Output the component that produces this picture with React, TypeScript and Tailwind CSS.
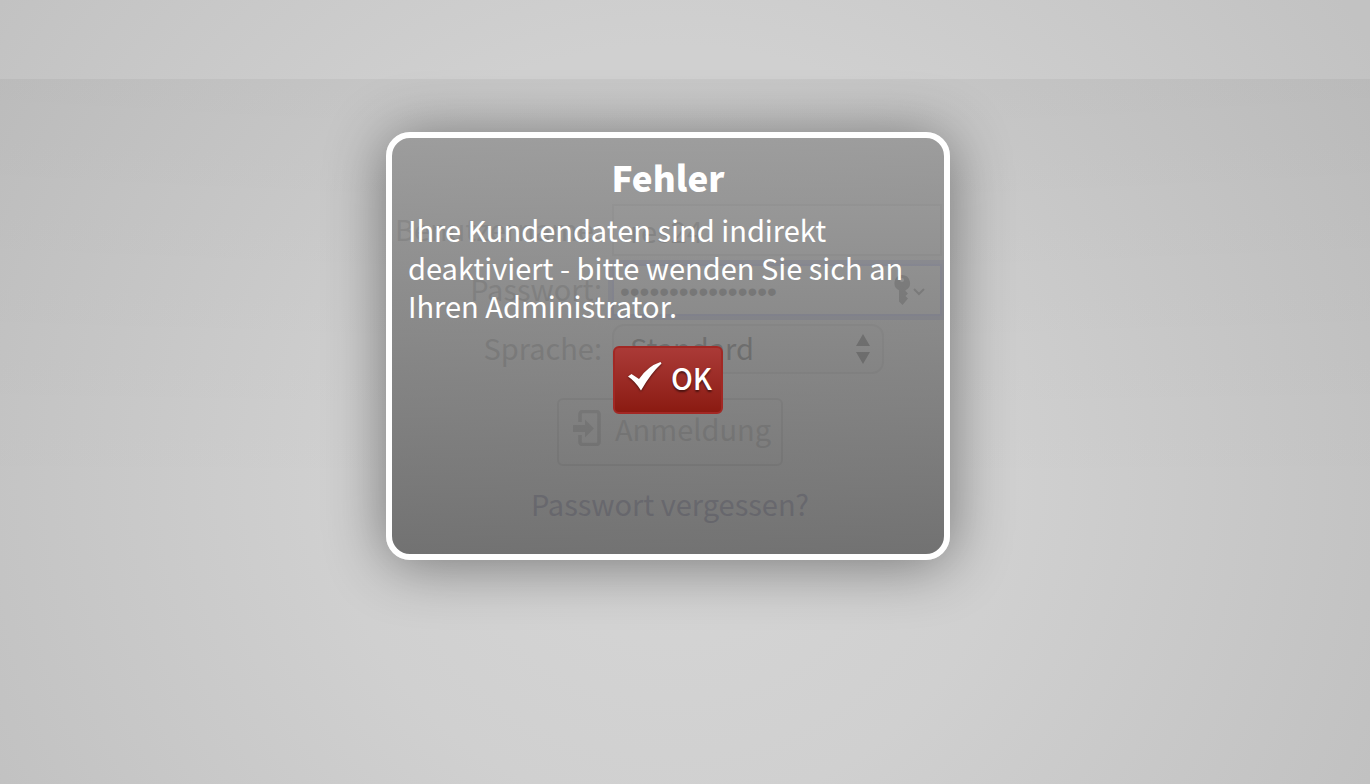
const labelText = "pb-1 text-right text-[#8e8e8e]";

function LoginIcon() {
  return (
    <svg viewBox="0 0 28 36" className="h-9 w-7 shrink-0" aria-hidden="true">
      <path d="M7 12V4a2.500 2.500 0 0 1 2.500-2.500h14A2.500 2.500 0 0 1 26 4v28a2.500 2.500 0 0 1-2.500 2.500h-14A2.500 2.500 0 0 1 7 32v-7" fill="none" stroke="currentColor" strokeWidth="3.600" />
      <path d="M0 15h12V9.500L21 18.500l-9 9V22H0z" fill="currentColor" />
    </svg>
  );
}

function KeyIcon() {
  return (
    <svg viewBox="0 0 32 30" className="h-[30px] w-8 shrink-0" aria-hidden="true">
      <path fillRule="evenodd" fill="currentColor" d="M8 0a8 8 0 0 1 3.500 15.200V16l2.500 2.500-2.500 2.500 2.500 2.500L8.500 30 5 26.500V15.200A8 8 0 0 1 8 0m0 3a2 2 0 1 0 0 4 2 2 0 0 0 0-4" />
      <path d="M20 14l5 5 5-5" fill="none" stroke="currentColor" strokeWidth="2" />
    </svg>
  );
}

function LoginForm() {
  return (
    <form className="mx-auto flex w-[552px] flex-col items-center pt-[125px]" onSubmit={(e) => e.preventDefault()}>
      <div className="grid w-full grid-cols-[210px_minmax(0,1fr)] items-center gap-x-[10px] gap-y-2 pr-[2px]">
        <label htmlFor="user" className={labelText}>Benutzername:</label>
        <input id="user" defaultValue="res24" className="h-[52px] w-full border-2 border-[#bababa] bg-[#d2d2d2] px-4 text-[#808080]" />
        <label htmlFor="pass" className={labelText}>Passwort:</label>
        <div className="flex h-[52px] items-center border-2 border-[#9a9fd0] bg-[#d0d0d0] pr-[14px] text-[#707070] ring-4 ring-[#a8acc8]">
          <input id="pass" type="password" defaultValue="geheim1234567890" className="min-w-0 flex-1 bg-transparent pt-1 pl-[6px] font-['Liberation_Sans',sans-serif] text-[28px] text-[#606060] outline-none" />
          <KeyIcon />
        </div>
        <label htmlFor="lang" className={labelText}>Sprache:</label>
        <div className="grid w-[272px] items-center">
          <select id="lang" className="col-start-1 row-start-1 h-[50px] w-full appearance-none rounded-xl border-2 border-[#b8b8b8] bg-[#cccccc] px-4 pb-1 text-[#505050]">
            <option>Standard</option>
          </select>
          <svg viewBox="0 0 14 30" className="pointer-events-none col-start-1 row-start-1 mr-[14px] h-[30px] w-[14px] justify-self-end" aria-hidden="true">
            <path d="M0 12L7 0l7 12zM0 18h14L7 30z" fill="#505050" />
          </svg>
        </div>
      </div>
      <div className="flex flex-col items-center pl-1">
        <button type="submit" className="mt-6 flex h-[68px] w-[226px] items-center gap-[14px] rounded-md border-2 border-[#b4b4b4] pb-2 pl-[14px] text-[#9c9c9c]">
          <LoginIcon />
          Anmeldung
        </button>
        <a href="#reset" className="mt-[18px] text-[#8484a0]">Passwort vergessen?</a>
      </div>
    </form>
  );
}

function ErrorDialog() {
  return (
    <div className="absolute inset-x-0 top-[132px] flex justify-center pr-[34px]">
      <div role="alertdialog" aria-modal="true" aria-labelledby="title" aria-describedby="message" className="flex min-h-[428px] w-[564px] flex-col items-center rounded-3xl border-[6px] border-white bg-linear-to-b from-[#929292]/80 to-[#5a5a5a]/80 px-4 pt-[14px] text-white shadow-[0_4px_60px_rgba(0,0,0,0.45)]">
        <h1 id="title" className="text-[35px] leading-[50px] font-black">Fehler</h1>
        <p id="message" className="mt-2 w-full">Ihre Kundendaten sind indirekt deaktiviert - bitte wenden Sie sich an Ihren Administrator.</p>
        <button type="button" className="mt-[22px] flex h-[68px] w-[110px] items-center gap-2 rounded-md border-2 border-[#a22824] bg-linear-to-b from-[#ab3a37] to-[#8b1a11] pb-[6px] pl-3 font-medium [text-shadow:0_2px_2px_rgba(0,0,0,0.5)]">
          <svg viewBox="0 0 36 32" className="h-8 w-9 shrink-0 drop-shadow-[0_1px_1px_rgba(0,0,0,0.5)]" aria-hidden="true">
            <path d="M1 15.500L4.500 13 12 18Q21 5 33.500 1L34.500 2.500Q24 12 14 29.500Q8 20 1 15.500z" fill="white" />
          </svg>
          OK
        </button>
      </div>
    </div>
  );
}

export default function App() {
  return (
    <div className="relative flex min-h-screen flex-col overflow-hidden bg-[radial-gradient(circle_at_49%_60%,#d6d6d6,#d0d0d0_340px,#bfbfbf_820px)] font-['Noto_Sans_CJK_SC','Noto_Sans',sans-serif] text-[29px] leading-[38px]">
      <header className="h-[79px] bg-white/5" />
      <main className="flex-1 bg-linear-to-b from-black/3 to-transparent to-60% pr-[34px]">
        <LoginForm />
      </main>
      <ErrorDialog />
    </div>
  );
}
